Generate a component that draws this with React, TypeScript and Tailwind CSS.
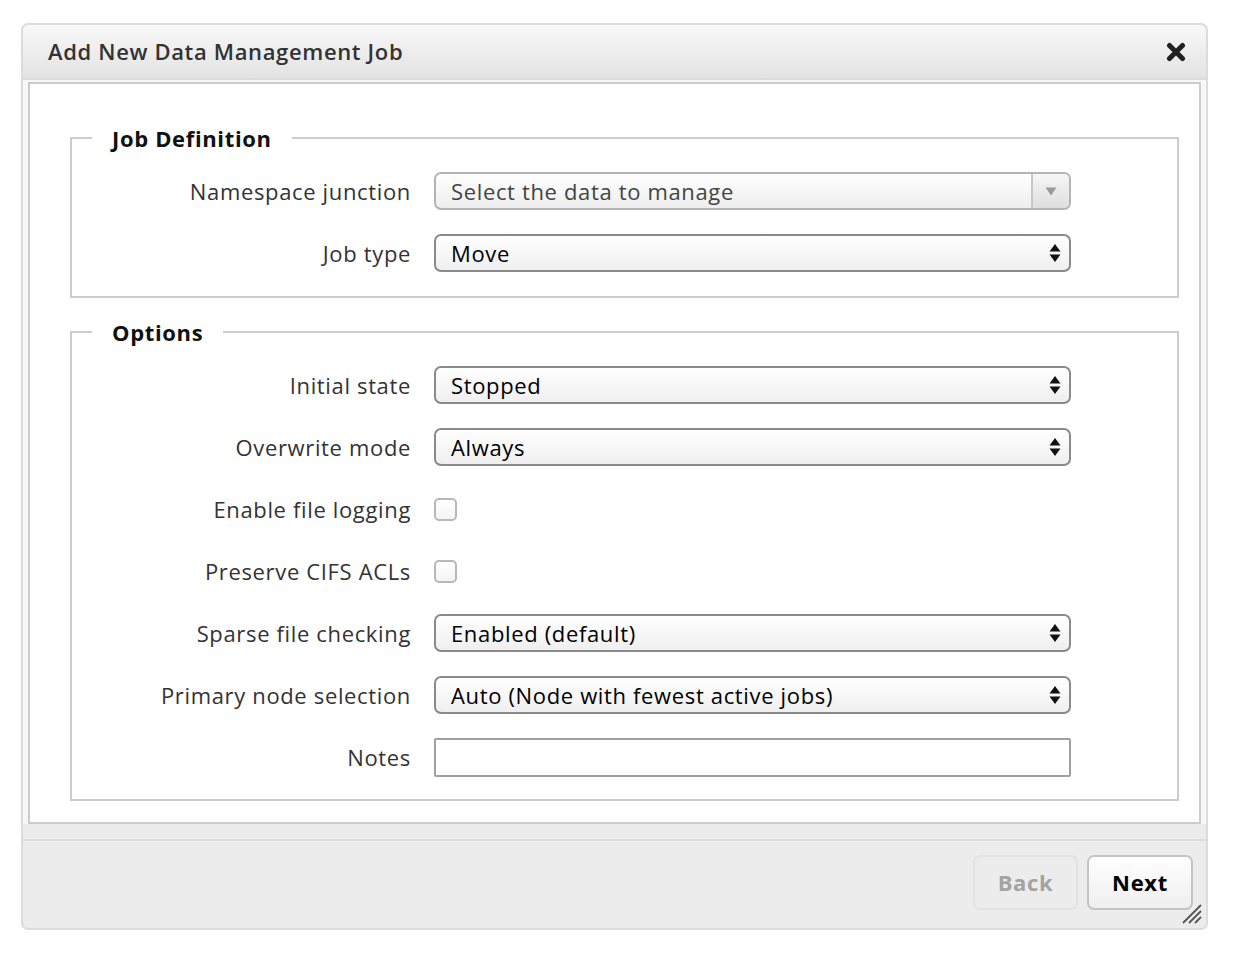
import React from "react";

function UpDown() {
  return (
    <svg width="12" height="20" viewBox="0 0 12 20" className="shrink-0">
      <path d="M6 1 L11.5 8.5 L0.5 8.5 Z" fill="#111" />
      <path d="M6 19 L11.5 11.5 L0.5 11.5 Z" fill="#111" />
    </svg>
  );
}

function SelectBox({ value }: { value: string }) {
  return (
    <div className="flex h-[38px] w-[637px] items-center justify-between rounded-[7px] border-2 border-[#8a8a8a] bg-gradient-to-b from-[#ffffff] to-[#efefef] pl-[15px] pr-[8px] text-[22px] text-black">
      <span>{value}</span>
      <UpDown />
    </div>
  );
}

function ChosenBox({ placeholder }: { placeholder: string }) {
  return (
    <div className="flex h-[38px] w-[637px] items-stretch overflow-hidden rounded-[7px] border-2 border-[#b4b4b4] bg-gradient-to-b from-[#ffffff] to-[#eeeeee] text-[22px] text-[#444]">
      <span className="flex flex-1 items-center pl-[15px]">{placeholder}</span>
      <span className="flex w-[38px] items-center justify-center border-l-2 border-[#c8c8c8] bg-gradient-to-b from-[#f6f6f6] to-[#dedede]">
        <svg width="12" height="9" viewBox="0 0 12 9">
          <path d="M0.5 0.5 L11.5 0.5 L6 8.5 Z" fill="#9a9a9a" />
        </svg>
      </span>
    </div>
  );
}

function Checkbox() {
  return (
    <div className="h-[23px] w-[23px] rounded-[5px] border-2 border-[#b8b8b8] bg-gradient-to-b from-white to-[#f4f4f4]" />
  );
}

function Row({ label, children }: { label: string; children: React.ReactNode }) {
  return (
    <div className="flex h-[38px] items-center gap-[23px]">
      <div className="w-[339px] text-right text-[22px] text-[#333]">{label}</div>
      {children}
    </div>
  );
}

function Group({
  title,
  bottom,
  children,
}: {
  title: string;
  bottom: string;
  children: React.ReactNode;
}) {
  return (
    <fieldset className={`mr-[20px] ml-[40px] border-2 border-[#cccccc] ${bottom}`}>
      <legend className="ml-[20px] px-[20px] text-[22px] leading-[32px] font-bold text-[#111]">
        {title}
      </legend>
      <div className="mt-[18px] flex flex-col gap-[24px]">{children}</div>
    </fieldset>
  );
}

export default function App() {
  return (
    <div
      className="min-h-screen bg-white pt-[23px] pl-[21px] tracking-[0.65px]"
      style={{ fontFamily: '"Open Sans", "Noto Sans", sans-serif' }}
    >
      <div className="relative w-[1187px] rounded-[7px] border-2 border-[#dcdcdc] bg-[#ececec]">
        <div className="flex h-[55px] items-center justify-between rounded-t-[6px] border-b-2 border-[#dcdcdc] bg-gradient-to-b from-[#f8f8f8] to-[#e3e3e3] pr-[20px] pl-[25px]">
          <span className="text-[22px] font-semibold text-[#333]">Add New Data Management Job</span>
          <svg width="20" height="20" viewBox="0 0 20 20">
            <path d="M3.5 3.5 L16.5 16.5 M16.5 3.5 L3.5 16.5" stroke="#222" strokeWidth="5" strokeLinecap="round" />
          </svg>
        </div>
        <div className="bg-[#f7f7f7] px-[5px] pt-[2px]">
          <div className="border-2 border-[#cccccc] bg-white pt-[38px] pb-[21px]">
            <Group title="Job Definition" bottom="pb-[24px]">
              <Row label="Namespace junction">
                <ChosenBox placeholder="Select the data to manage" />
              </Row>
              <Row label="Job type">
                <SelectBox value="Move" />
              </Row>
            </Group>
            <div className="h-[18px]" />
            <Group title="Options" bottom="pb-[23px]">
              <Row label="Initial state">
                <SelectBox value="Stopped" />
              </Row>
              <Row label="Overwrite mode">
                <SelectBox value="Always" />
              </Row>
              <Row label="Enable file logging">
                <Checkbox />
              </Row>
              <Row label="Preserve CIFS ACLs">
                <Checkbox />
              </Row>
              <Row label="Sparse file checking">
                <SelectBox value="Enabled (default)" />
              </Row>
              <Row label="Primary node selection">
                <SelectBox value="Auto (Node with fewest active jobs)" />
              </Row>
              <Row label="Notes">
                <div className="h-[39px] w-[637px] rounded-[2px] border-2 border-[#a0a0a0] bg-white" />
              </Row>
            </Group>
          </div>
        </div>
        <div className="mt-[15px] border-t-2 border-[#dddddd] pt-[14px] pr-[13px] pb-[18px]">
          <div className="flex justify-end gap-[9px]">
            <button className="h-[55px] w-[105px] rounded-[7px] border-2 border-[#e2e2e2] bg-[#ececec] text-[22px] font-bold text-[#a3a3a3]">
              Back
            </button>
            <button className="h-[55px] w-[106px] rounded-[7px] border-2 border-[#c4c4c4] bg-gradient-to-b from-white to-[#efefef] text-[22px] font-bold text-black">
              Next
            </button>
          </div>
        </div>
        <svg
          width="24"
          height="24"
          viewBox="0 0 24 24"
          className="absolute right-[4px] bottom-[4px]"
        >
          <path d="M23 5 L5 23 M23 11 L11 23 M23 17 L17 23" stroke="#555" strokeWidth="1.8" />
        </svg>
      </div>
    </div>
  );
}
